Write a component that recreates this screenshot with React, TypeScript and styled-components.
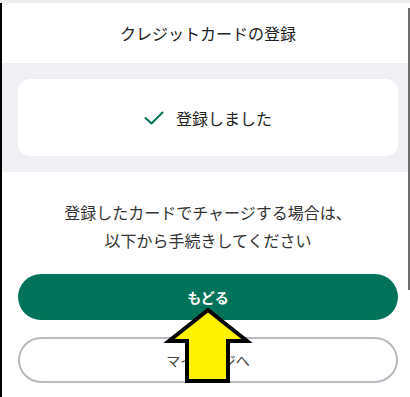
import React from "react";
import styled, { createGlobalStyle } from "styled-components";

const GlobalStyle = createGlobalStyle`
  html, body {
    margin: 0;
    padding: 0;
    background: #ffffff;
    overflow: hidden;
  }
  body {
    font-family: "Noto Sans CJK JP", "Noto Sans", sans-serif;
  }
`;

const Page = styled.div`
  position: relative;
  width: 410px;
  height: 397px;
  overflow: hidden;
  background: #ffffff;
  display: flex;
  flex-direction: column;
`;

const TopStrip = styled.div`
  height: 3px;
  background: #eeedf2;
  flex: none;
`;

const Frame = styled.div`
  flex: 1;
  border-left: 2px solid #000000;
  display: flex;
  flex-direction: column;
`;

const Header = styled.header`
  height: 60px;
  display: flex;
  align-items: center;
  justify-content: center;
  padding: 0 12px 0 16px;
`;

const Title = styled.h1`
  margin: 0;
  font-size: 16px;
  font-weight: 400;
  color: #222222;
  letter-spacing: 0;
`;

const GraySection = styled.section`
  background: #f0eff4;
  padding: 16px 12px 16px 16px;
`;

const Card = styled.div`
  background: #ffffff;
  border-radius: 12px;
  height: 77px;
  display: flex;
  align-items: center;
  justify-content: center;
  gap: 12px;
`;

const CardText = styled.span`
  font-size: 16px;
  color: #222222;
`;

const Body = styled.section`
  padding: 26px 12px 0 16px;
  display: flex;
  flex-direction: column;
`;

const Message = styled.p`
  margin: 0;
  font-size: 16px;
  line-height: 28px;
  color: #333333;
  text-align: center;
`;

const Buttons = styled.div`
  margin-top: 20px;
  display: flex;
  flex-direction: column;
  gap: 17px;
`;

const Button = styled.button<{ $primary?: boolean }>`
  height: 46px;
  border-radius: 23px;
  font-family: "Noto Sans CJK JP", "Noto Sans", sans-serif;
  font-size: 14px;
  box-sizing: border-box;
  cursor: pointer;
  background: ${(p) => (p.$primary ? "#00745a" : "#ffffff")};
  color: ${(p) => (p.$primary ? "#ffffff" : "#444444")};
  font-weight: ${(p) => (p.$primary ? 700 : 400)};
  border: ${(p) => (p.$primary ? "none" : "2px solid #b9b9c1")};
`;

const ScrollThumb = styled.div`
  position: absolute;
  right: 0;
  top: 8px;
  width: 2px;
  height: 282px;
  background: #6e6e6e;
`;

const ArrowOverlay = styled.svg`
  position: absolute;
  left: 0;
  top: 0;
  pointer-events: none;
`;

const CheckIcon = () => (
  <svg width="20" height="14" viewBox="0 0 20 14" aria-hidden>
    <polyline
      points="1.5,7 7.5,12.5 18.5,1.5"
      fill="none"
      stroke="#00745a"
      strokeWidth="2"
      strokeLinecap="round"
      strokeLinejoin="round"
    />
  </svg>
);

export default function App() {
  return (
    <>
      <GlobalStyle />
      <Page>
        <TopStrip />
        <Frame>
          <Header>
            <Title>クレジットカードの登録</Title>
          </Header>
          <GraySection>
            <Card>
              <CheckIcon />
              <CardText>登録しました</CardText>
            </Card>
          </GraySection>
          <Body>
            <Message>
              登録したカードでチャージする場合は、
              <br />
              以下から手続きしてください
            </Message>
            <Buttons>
              <Button $primary>もどる</Button>
              <Button>マイページへ</Button>
            </Buttons>
          </Body>
        </Frame>
        <ScrollThumb />
        <ArrowOverlay width="410" height="397" viewBox="0 0 410 397">
          <polygon
            points="208,310 247,341 228,341 228,381 187,381 187,341 169,341"
            fill="#fff200"
            stroke="#000000"
            strokeWidth="4"
            strokeLinejoin="miter"
          />
        </ArrowOverlay>
      </Page>
    </>
  );
}
